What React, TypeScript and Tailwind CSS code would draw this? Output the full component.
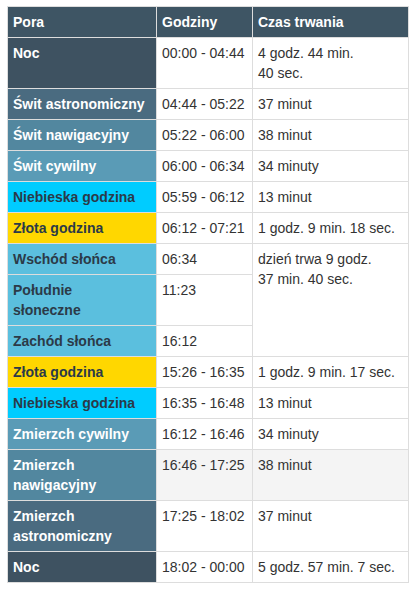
const rows: {
  name: string;
  bg: string;
  dark?: boolean;
  hours: string;
  duration?: string;
  span?: number;
  striped?: boolean;
}[] = [
  { name: "Noc", bg: "bg-[#3e5261]", hours: "00:00 - 04:44", duration: "4 godz. 44 min.\n40 sec." },
  { name: "Świt astronomiczny", bg: "bg-[#4a6b80]", hours: "04:44 - 05:22", duration: "37 minut" },
  { name: "Świt nawigacyjny", bg: "bg-[#52879f]", hours: "05:22 - 06:00", duration: "38 minut" },
  { name: "Świt cywilny", bg: "bg-[#5a9bb6]", hours: "06:00 - 06:34", duration: "34 minuty" },
  { name: "Niebieska godzina", bg: "bg-[#00ccff]", dark: true, hours: "05:59 - 06:12", duration: "13 minut" },
  { name: "Złota godzina", bg: "bg-[#ffd700]", dark: true, hours: "06:12 - 07:21", duration: "1 godz. 9 min. 18 sec." },
  { name: "Wschód słońca", bg: "bg-[#5bbfde]", dark: true, hours: "06:34", duration: "dzień trwa 9 godz.\n37 min. 40 sec.", span: 3 },
  { name: "Południe\nsłoneczne", bg: "bg-[#5bbfde]", dark: true, hours: "11:23" },
  { name: "Zachód słońca", bg: "bg-[#5bbfde]", dark: true, hours: "16:12" },
  { name: "Złota godzina", bg: "bg-[#ffd700]", dark: true, hours: "15:26 - 16:35", duration: "1 godz. 9 min. 17 sec." },
  { name: "Niebieska godzina", bg: "bg-[#00ccff]", dark: true, hours: "16:35 - 16:48", duration: "13 minut" },
  { name: "Zmierzch cywilny", bg: "bg-[#5a9bb6]", hours: "16:12 - 16:46", duration: "34 minuty" },
  { name: "Zmierzch\nnawigacyjny", bg: "bg-[#52879f]", hours: "16:46 - 17:25", duration: "38 minut", striped: true },
  { name: "Zmierzch\nastronomiczny", bg: "bg-[#4a6b80]", hours: "17:25 - 18:02", duration: "37 minut" },
  { name: "Noc", bg: "bg-[#3e5261]", hours: "18:02 - 00:00", duration: "5 godz. 57 min. 7 sec." },
];

const cell = "border border-[#dddddd] px-[5px] py-[5px] align-top whitespace-pre-line";

export default function App() {
  return (
    <div className="min-h-screen bg-white pt-[6px] pl-[7px] font-['Liberation_Sans',Arial,sans-serif] text-[14px] leading-5 text-[#333333]">
      <table className="w-[401px] table-fixed border-collapse">
        <colgroup>
          <col className="w-[149px]" />
          <col className="w-[96px]" />
          <col className="w-[156px]" />
        </colgroup>
        <thead>
          <tr className="bg-[#3e5564] text-left font-bold text-white">
            <th className={cell}>Pora</th>
            <th className={cell}>Godziny</th>
            <th className={cell}>Czas trwania</th>
          </tr>
        </thead>
        <tbody>
          {rows.map((r, i) => (
            <tr key={i} className={r.striped ? "bg-[#f4f4f4]" : "bg-white"}>
              <td
                className={`${cell} ${r.bg} font-bold ${
                  r.dark ? "text-[#2b3a48]" : "text-white"
                }`}
              >
                {r.name}
              </td>
              <td className={`${cell} whitespace-nowrap`}>{r.hours}</td>
              {r.duration && (
                <td className={cell} rowSpan={r.span}>
                  {r.duration}
                </td>
              )}
            </tr>
          ))}
        </tbody>
      </table>
    </div>
  );
}
